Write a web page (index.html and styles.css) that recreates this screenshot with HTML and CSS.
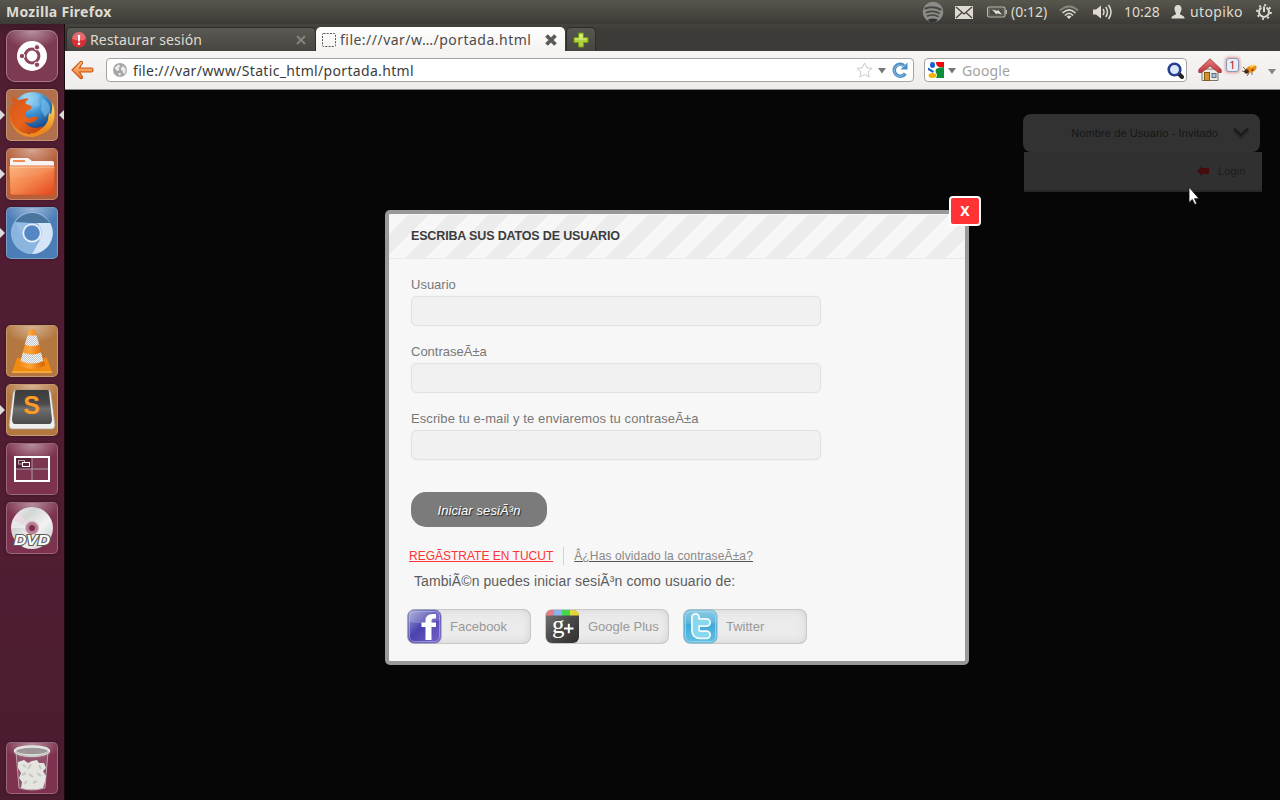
FILE: index.html
```html
<!DOCTYPE html>
<html lang="es">
<head>
<meta charset="utf-8">
<title>Mozilla Firefox</title>
<link rel="stylesheet" href="styles.css">
</head>
<body>
<svg class="defs" width="0" height="0">
  <defs>
    <linearGradient id="folder" x1="0" y1="0" x2="1" y2="1"><stop offset="0" stop-color="#f9b27a"/><stop offset=".5" stop-color="#f4854c"/><stop offset="1" stop-color="#e2431b"/></linearGradient>
    <radialGradient id="globe" cx=".4" cy=".15" r=".9"><stop offset="0" stop-color="#c4eefb"/><stop offset=".4" stop-color="#3f96d6"/><stop offset="1" stop-color="#0b2a6c"/></radialGradient>
    <linearGradient id="fox" x1="0" y1="0" x2="1" y2="1"><stop offset="0" stop-color="#d5561d"/><stop offset=".55" stop-color="#e8631a"/><stop offset="1" stop-color="#b83c0c"/></linearGradient>
    <linearGradient id="tail" x1="0" y1="0" x2="0" y2="1"><stop offset="0" stop-color="#ffe45c"/><stop offset="1" stop-color="#e87813"/></linearGradient>
    <linearGradient id="cone" x1="0" y1="0" x2="1" y2="0"><stop offset="0" stop-color="#f08a12"/><stop offset=".4" stop-color="#ffa63a"/><stop offset="1" stop-color="#d85f00"/></linearGradient>
    <linearGradient id="key" x1="0" y1="0" x2="0" y2="1"><stop offset="0" stop-color="#3c3c3c"/><stop offset=".4" stop-color="#4a4a4a"/><stop offset=".55" stop-color="#6d6d6d"/><stop offset="1" stop-color="#4b4b4b"/></linearGradient>
    <linearGradient id="disc" x1="0" y1="0" x2="1" y2="1"><stop offset="0" stop-color="#f4f4f4"/><stop offset=".3" stop-color="#d4d6d4"/><stop offset=".6" stop-color="#f2f2f2"/><stop offset="1" stop-color="#c3c3c3"/></linearGradient>
    <linearGradient id="back" x1="0" y1="0" x2="0" y2="1"><stop offset="0" stop-color="#fbc58f"/><stop offset="1" stop-color="#ee7a2a"/></linearGradient>
    <linearGradient id="roof" x1="0" y1="0" x2="0" y2="1"><stop offset="0" stop-color="#e27c7c"/><stop offset="1" stop-color="#bf3a40"/></linearGradient>
    <linearGradient id="fb" x1="0" y1="0" x2="1" y2="1"><stop offset="0" stop-color="#9fa6d8"/><stop offset=".45" stop-color="#4b42ae"/><stop offset="1" stop-color="#7a62c8"/></linearGradient>
    <linearGradient id="gp" x1="0" y1="0" x2="1" y2="1"><stop offset="0" stop-color="#777"/><stop offset=".5" stop-color="#4a4a4a"/><stop offset="1" stop-color="#2e2e2e"/></linearGradient>
    <linearGradient id="tw" x1="0" y1="0" x2="0" y2="1"><stop offset="0" stop-color="#8fcbe4"/><stop offset=".4" stop-color="#5cb6dc"/><stop offset=".42" stop-color="#3fa9d6"/><stop offset="1" stop-color="#62c0e2"/></linearGradient>
    <pattern id="mesh" width="2" height="2" patternUnits="userSpaceOnUse"><rect width="2" height="2" fill="#f4f4f4"/><rect width="1" height="1" fill="#bfc6cc"/><rect x="1" y="1" width="1" height="1" fill="#bfc6cc"/></pattern>
  </defs>
</svg>

<header class="panel">
  <span class="panel-title">Mozilla Firefox</span>
  <div class="indicators">
    <svg class="i-spot" width="22" height="22" viewBox="0 0 22 22"><circle cx="11" cy="11" r="10.3" fill="#8b8b89"/><g fill="none" stroke="#47463f" stroke-linecap="round"><path d="M3.5 7.5Q11 4.500 18.500 8.500" stroke-width="2"/><path d="M4.500 11.500Q11 9 17 12" stroke-width="1.800"/><path d="M5.500 15Q11 13 16 15.500" stroke-width="1.500"/></g><path d="M6 18.500q5-2 9.500 0l-1 2q-4 1.500-7.500 0z" fill="#33322e"/></svg>
    <svg class="i-mail" width="18" height="13" viewBox="0 0 18 13"><rect width="18" height="13" fill="#dfdbd2"/><path d="M1 1l8 7 8-7M1 12l6-5.500M17 12l-6-5.500" fill="none" stroke="#45443e" stroke-width="1.300"/></svg>
    <svg class="i-batt" width="20" height="12" viewBox="0 0 20 12"><rect x=".6" y="1" width="17.400" height="10" rx="1.500" fill="none" stroke="#bdb9af" stroke-width="1.200"/><rect x="2.500" y="3" width="13.500" height="6" fill="none" stroke="#66645b"/><path d="M19.200 4v4" stroke="#bdb9af" stroke-width="1.500"/><path d="M5 3.500l5.500 1.500.5-1.300 4 4.800-5-1.200-.5 1.200z" fill="#e8e4da"/></svg>
    <span class="t-batt">(0:12)</span>
    <svg class="i-wifi" width="20" height="14" viewBox="0 0 20 14"><g fill="none" stroke-width="1.700"><path d="M1 5.500Q10-2.500 19 5.500" stroke="#8b8980"/><path d="M3.500 8Q10 1.500 16.500 8" stroke="#dfdbd2"/><path d="M6 10.500Q10 6 14 10.500" stroke="#dfdbd2"/></g><path d="M10 14l-2.500-2.500q2.500-2 5 0z" fill="#dfdbd2"/></svg>
    <svg class="i-vol" width="21" height="16" viewBox="0 0 21 16"><path d="M1 5.500h3L9 1.500v13L4 10.500H1z" fill="#dfdbd2"/><g fill="none" stroke="#dfdbd2" stroke-width="1.500"><path d="M11 5q2 3 0 6M13.800 3q3.300 5 0 10M16.500 1q5 7 0 14"/></g></svg>
    <span class="t-clock">10:28</span>
    <svg class="i-user" width="14" height="14" viewBox="0 0 14 14"><path d="M7 0C9.500 0 10.800 1.800 10.500 4.500 10.300 6.500 9 7.500 9 9c0 1 4.500 1.200 4.700 4.500H.3C.5 10.200 5 10 5 9 5 7.500 3.700 6.500 3.500 4.500 3.200 1.800 4.500 0 7 0z" fill="#dfdbd2"/></svg>
    <span class="t-user">utopiko</span>
    <svg class="i-gear" width="16" height="16" viewBox="0 0 16 16"><g fill="none" stroke="#dfdbd2"><path d="M5.500 3.600a5 5 0 1 0 5 0" stroke-width="2"/><circle cx="8" cy="8" r="6.900" stroke-width="2" stroke-dasharray="2 3.420"/><path d="M8 2.500v5.500" stroke-width="2"/></g></svg>
  </div>
</header>

<div class="desktop">
  <nav class="launcher">
    <div class="tile dash"><svg viewBox="0 0 52 52"><circle cx="26" cy="26" r="15" fill="#fff"/><circle cx="26" cy="26" r="6.900" fill="none" stroke="#8d4560" stroke-width="3"/><g fill="#8d4560" stroke="#fff" stroke-width="1"><circle cx="16" cy="26" r="2.700"/><circle cx="31" cy="17.300" r="2.700"/><circle cx="31" cy="34.700" r="2.700"/></g></svg></div>
    <div class="tile tan running focused"><svg viewBox="0 0 52 52"><circle cx="27" cy="24" r="21" fill="url(#globe)"/><path d="M20 6q8-3 14 0l-3 6 3 4-5 2-4-4-4 0zM36 9q9 5 8 13l-5 6-4-7z" fill="#7fc4ec" opacity=".6"/><path d="M46 13c3 6 3 12 2 18-2 10-11 16-21 16l-6-5c9 1 18-2 21-11 0-3 1-5 1-8 1 2 2 2 2 2s2-6 1-12z" fill="url(#tail)"/><path d="M7 6c1 3 4 5 7 5 3-1 6-2 9-1-3 2-4 3-3 5 2 1 5 1 6 3-1 3-6 4-7 6 0 3 2 5 5 5 3-1 6-2 8 0-3 5-9 6-13 4 3 5 10 8 18 4-5 8-16 10-24 4C4 36 2 27 4 20c1-3 2-4 3-5-1-3-1-6 0-9z" fill="url(#fox)"/><path d="M4 24c0 12 9 21 21 21 7 0 12-3 15-6-4 7-10 9-15 9C12 48 3 37 4 24z" fill="#ee8a20"/></svg></div>
    <div class="tile rust running"><svg viewBox="0 0 52 52"><path d="M4 19V12q0-2 2-2h16l4 3h20q2 0 2 2v6z" fill="#f7f4f1"/><rect x="7" y="12" width="12" height="2" fill="#f28c53"/><path d="M3 18h46l-1 27q0 2-2 2H6q-2 0-2-2z" fill="url(#folder)" stroke="#d25322" stroke-width=".8"/><path d="M4 19h44" stroke="#ffc79a"/><path d="M4 29q25 2 44-8v-2H4z" fill="#fff" opacity=".05"/></svg></div>
    <div class="tile blue running"><svg viewBox="0 0 52 52"><circle cx="26" cy="26" r="21" fill="#95bce5"/><path d="M9 15A21 21 0 0 1 44 16H26z" fill="#49759e"/><path d="M44 16A21 21 0 0 1 26 47l9-17q3-7-4-14z" fill="#d4e5f7"/><path d="M9 14A21 21 0 0 0 26 47l8-14-9 2-9-7z" fill="#8bb4df"/><circle cx="26" cy="26" r="9.500" fill="#e8f2fb"/><circle cx="26" cy="26" r="7.800" fill="#5487c3"/></svg></div>
    <div class="slot"></div>
    <div class="tile amber"><svg viewBox="0 0 52 52"><path d="M11 33h30l5 14q0 1-1 1H7q-1 0-1-1z" fill="#f18a10"/><path d="M6 47h40" stroke="#ffc25c"/><path d="M23 5q3-2 6 0l10 35q-13 8-26 0z" fill="url(#cone)"/><path d="M21.500 10.500h9l2.700 9q-7 3-14.400 0zM17 27.500q9 4 18 0l2.400 8.500q-11 5-22.800 0z" fill="url(#mesh)"/></svg></div>
    <div class="tile amber running"><svg viewBox="0 0 52 52"><path d="M7 9q1-3 3-3h32q2 0 3 3l4 32q0 4-3 4H6q-3 0-3-4z" fill="#eeeeec" stroke="#9c9a96" stroke-width=".7"/><path d="M9 8q0-2 2-2h30q2 0 2 2l3 27q0 5-3 5H9q-3 0-3-5z" fill="url(#key)"/><text class="sub-s" x="25.500" y="30">S</text></svg></div>
    <div class="tile plum"><svg viewBox="0 0 52 52"><rect x="9" y="14" width="34" height="24" fill="#7c3651" stroke="#fff" stroke-width="2"/><rect x="10" y="15" width="16" height="11" fill="#56233a"/><path d="M26 15v22M10 26h32" stroke="#a9a0a4"/><rect x="12.500" y="17.500" width="6" height="3.500" fill="none" stroke="#b9aab0"/><rect x="16.500" y="19.500" width="7" height="4" fill="#56233a" stroke="#fff"/></svg></div>
    <div class="tile plum"><svg viewBox="0 0 52 52"><circle cx="26" cy="26" r="21" fill="url(#disc)"/><path d="M26 26L7 17l5-6z" fill="#f5d9ec" opacity=".7"/><path d="M26 26L5 26l2-8z" fill="#eceff0" opacity=".7"/><circle cx="26" cy="26" r="6.500" fill="#b87d93" stroke="#d9b9c5"/><circle cx="26" cy="26" r="3" fill="#7a2d49"/><text class="dvd" x="26" y="43" textLength="36" lengthAdjust="spacingAndGlyphs">DVD</text></svg></div>
    <div class="tile plum trash"><svg viewBox="0 0 52 52"><path d="M10 10l3 36q13 4 26 0l3-36z" fill="#c9a3b1" fill-opacity=".25" stroke="#c9bcc1" stroke-width=".8"/><path d="M12 20l6-2 4 3 4-2 5-1 2 3 5 0 2 5-3 3 3 5-1 6-2 6q-11 3-22 0l1-6-3-4 2-5-3-5z" fill="#e4e4e0"/><path d="M17 23l3 2M25 22l-3 5M33 23l2 4M16 33l4-2M23 32l4 3M31 31l4 3M18 42l3-3M27 41l4-2" fill="none" stroke="#c6c7c2" stroke-width="2"/><ellipse cx="26" cy="9" rx="17" ry="4.500" fill="#9d9799" stroke="#e4e4e2" stroke-width="2.500"/><path d="M9 10q17 9 34 0" fill="none" stroke="#c4c4c1" stroke-width="1.500"/></svg></div>
  </nav>

  <main class="browser">
    <div class="tabs">
      <div class="tab idle">
        <svg width="16" height="16" viewBox="0 0 16 16"><circle cx="8" cy="8" r="7.500" fill="#d32f35"/><path d="M1 7a7 7 0 0 1 14 0q-7 3-14 0z" fill="#ee8286" opacity=".7"/><path d="M6.800 3h2.400l-.4 6.500H7.200z" fill="#fff"/><circle cx="8" cy="11.800" r="1.300" fill="#fff"/></svg>
        <span class="t-tab1">Restaurar sesión</span>
        <svg class="x" width="12" height="12" viewBox="0 0 12 12"><path d="M2 2l8 8M10 2l-8 8" stroke="#85837d" stroke-width="2"/></svg>
      </div>
      <div class="tab current">
        <svg width="14" height="14" viewBox="0 0 14 14"><rect x=".5" y=".5" width="13" height="13" rx="1" fill="none" stroke="#555" stroke-dasharray="2 1.200"/></svg>
        <span class="t-tab2">file:///var/w…/portada.html</span>
        <svg class="x" width="14" height="14" viewBox="0 0 14 14"><path d="M2.500 2.500l9 9M11.500 2.500l-9 9" stroke="#5a5a56" stroke-width="3.800"/></svg>
      </div>
      <div class="newtab"><svg width="16" height="16" viewBox="0 0 16 16"><path d="M5.500 1h5v4.500H15v5h-4.500V15h-5v-4.500H1v-5h4.500z" fill="#b1d23c" stroke="#6f9a1a"/><path d="M6.500 2h3v4.500H14v1H2v-1h4.500z" fill="#d8ec7c"/></svg></div>
    </div>
    <div class="toolbar">
      <svg class="back" width="23" height="20" viewBox="0 0 23 20"><path d="M1 10L9.500 1.500q2.500-.5 2 1.500L8.500 8H20.500q1.500 0 1.500 1.500v1q0 1.500-1.500 1.500H8.500l3 5q.5 2-2 1.500z" fill="url(#back)" stroke="#cc5712" stroke-width="1.100"/></svg>
      <div class="urlbar">
        <svg width="14" height="14" viewBox="0 0 14 14"><circle cx="7" cy="7" r="7" fill="#a5a5a5"/><path d="M1.500 5l4-3.500 2 1.500-2 2 1 2-2.500 1zM8 5l2-2 3 3-1 5-2-1-.5-2.500L8 7.500zM5 10l3 0-1 3.500z" fill="#ececec"/></svg>
        <span class="t-url">file:///var/www/Static_html/portada.html</span>
        <svg class="star" width="17" height="16" viewBox="0 0 17 16"><path d="M8.500 1l2.200 4.800 5.300.6-4 3.500 1.200 5.100-4.700-2.600L3.800 15 5 9.900l-4-3.500 5.300-.6z" fill="#fff" stroke="#c9c9c9"/></svg>
        <svg class="drop" width="8" height="6" viewBox="0 0 8 6"><path d="M0 0h8L4 5.500z" fill="#777"/></svg>
        <svg class="reload" width="16" height="16" viewBox="0 0 16 16"><path d="M13.300 11.500A6 6 0 1 1 12 3.500" fill="none" stroke="#4f8fc8" stroke-width="3.500"/><path d="M15.500.5v7h-7z" fill="#4f8fc8"/><path d="M12.800 11.500A5.700 5.700 0 1 1 11 3.800" fill="none" stroke="#8bbbe2" stroke-width="1"/></svg>
      </div>
      <div class="search">
        <svg width="16" height="16" viewBox="0 0 16 16"><rect width="16" height="16" fill="#fff"/><path d="M8 0h8v5H11q-3-1-3-5z" fill="#f00808"/><path d="M8 7q3-2 8-2v11H8q2-3 0-5-1-2 0-4z" fill="#0b8f3c"/><ellipse cx="4.500" cy="3" rx="2.500" ry="3" fill="#1a63cc"/><path d="M0 5.500l6 3.500-1 2-5-3z" fill="#1a63cc"/><ellipse cx="4.500" cy="13.500" rx="4" ry="2.500" fill="#f5b50a"/></svg>
        <svg class="drop" width="8" height="6" viewBox="0 0 8 6"><path d="M0 0h8L4 5.500z" fill="#777"/></svg>
        <span class="t-google">Google</span>
        <svg class="lens" width="17" height="17" viewBox="0 0 17 17"><path d="M11 11l4 4" stroke="#222" stroke-width="4" stroke-linecap="round"/><circle cx="7.500" cy="7.500" r="5.800" fill="#d9e7f7" stroke="#263f92" stroke-width="2.600"/></svg>
      </div>
      <svg class="home" width="24" height="24" viewBox="0 0 24 24"><path d="M4 11h16v11.500H4z" fill="#eeeae3" stroke="#77756f"/><rect x="6.500" y="14.500" width="5" height="8" fill="#cf9332" stroke="#8b5a12"/><rect x="14" y="15.500" width="4" height="4" fill="#a9c3df" stroke="#5c7187"/><path d="M12 .8L.8 11.500V14.500h2.700L12 8l8.500 6.500h2.700V11.500z" fill="url(#roof)" stroke="#9b2b30" stroke-width=".8"/></svg>
      <span class="badge">1</span>
      <svg class="bug" width="16" height="14" viewBox="0 0 16 14"><path d="M1 4l3 3M0 8l4 1M5 13l2-3M10 12l0-3M14 4l-3 1" stroke="#444" stroke-width=".8"/><ellipse cx="9" cy="6" rx="6" ry="3.400" transform="rotate(-25 9 6)" fill="#e98a13"/><path d="M8 4l5-2" stroke="#ffdf6a" stroke-width="1.500"/><circle cx="4.500" cy="8.500" r="2.300" fill="#4a2a12"/><circle cx="10.500" cy="7" r="1" fill="#8f2608"/></svg>
      <svg class="drop end" width="8" height="6" viewBox="0 0 8 6"><path d="M0 0h8L4 5.500z" fill="#888"/></svg>
    </div>

    <section class="page">
      <div class="account">
        <div class="account-head"><span>Nombre de Usuario - Invitado</span><svg width="16" height="13" viewBox="0 0 16 13"><path d="M1 3l7 6.500L15 3" fill="none" stroke="#272727" stroke-width="4"/><path d="M1 1.500l7 6.500 7-6.500" fill="none" stroke="#1a1a1a" stroke-width="2"/></svg></div>
        <div class="account-menu"><svg width="12" height="10" viewBox="0 0 12 10"><path d="M0 5L5 0v2h7v6H5V10z" fill="#450c0c"/></svg><span>Login</span></div>
      </div>

      <div class="modal">
        <a class="close">X</a>
        <h1>ESCRIBA SUS DATOS DE USUARIO</h1>
        <form class="form">
          <label class="field"><span>Usuario</span><input type="text"></label>
          <label class="field"><span>ContraseÃ±a</span><input type="text"></label>
          <label class="field recover"><span>Escribe tu e-mail y te enviaremos tu contraseÃ±a</span><input type="text"></label>
          <button type="button" class="submit">Iniciar sesiÃ³n</button>
        </form>
        <div class="links"><a class="register">REGÃSTRATE EN TUCUT</a><a class="forgot">Â¿Has olvidado la contraseÃ±a?</a></div>
        <p class="also">TambiÃ©n puedes iniciar sesiÃ³n como usuario de:</p>
        <div class="social">
          <a><svg width="35" height="35" viewBox="0 0 35 35"><rect x="1" y="1" width="33" height="33" rx="6" fill="url(#fb)" stroke="#7d80b8"/><rect x="2.500" y="2.500" width="30" height="30" rx="5" fill="none" stroke="#aaa8e0" opacity=".7"/><path d="M2 2h31v9q-16 5-31 2z" fill="#fff" opacity=".18"/><path d="M18.500 31V18h-4v-4.500h4v-2q0-6.500 7-6.500h3.500v4.500H27q-2.500 0-2.500 2.500v1.500H29V18h-4.500v13z" fill="#fff"/></svg>Facebook</a>
          <a><svg width="35" height="35" viewBox="0 0 35 35"><rect x="1" y="1" width="33" height="33" rx="6" fill="url(#gp)"/><path d="M1 6q0-5 6-5h2.500v5.500H1z" fill="#e57d88"/><path d="M9 1h8.500v5.500H9z" fill="#8db1ea"/><path d="M17 1h8.500v5.500H17z" fill="#42d94a"/><path d="M25 1h3q6 0 6 5.500h-9z" fill="#e6d43b"/><text class="gplus" x="7" y="24">g</text><path d="M19 19.500h9.500M23.800 14.800v9.500" stroke="#fff" stroke-width="2"/></svg>Google Plus</a>
          <a><svg width="35" height="35" viewBox="0 0 35 35"><rect x="1" y="1" width="33" height="33" rx="6" fill="url(#tw)" stroke="#7db8d2"/><rect x="2.500" y="2.500" width="30" height="30" rx="5" fill="none" stroke="#a9dcf0" opacity=".7"/><g fill="none" stroke-linecap="round" stroke-linejoin="round"><path d="M12.500 8.500V21q0 4.800 4.800 4.800h6.200M12.500 13.500h11" stroke="#f4f8fa" stroke-width="9"/><path d="M12.500 8.500V21q0 4.800 4.800 4.800h6.200M12.500 13.500h11" stroke="#86d8ef" stroke-width="5.400"/></g></svg>Twitter</a>
        </div>
      </div>
    </section>
  </main>
</div>
<svg class="cursor" width="12" height="20" viewBox="0 0 12 20"><path d="M1 1v15.500l3.300-3 2.500 5 2-1-2.300-4.800H11z" fill="#fff" stroke="#111" stroke-width=".8"/></svg>
</body>
</html>
```
FILE: styles.css
```css
* { box-sizing: border-box; }
body {
  margin: 0; width: 1280px; height: 800px; overflow: hidden;
  display: flex; flex-direction: column;
  font-family: "Liberation Sans", Arial, sans-serif; background: #060606;
}
.defs { position: absolute; }
svg { display: block; flex: none; }

/* top panel */
.panel {
  flex: none; height: 24px; display: flex; align-items: center; justify-content: space-between;
  padding: 0 8px 0 6px; background: linear-gradient(#58564c, #3c3b37);
  color: #dfdbd2; font: 14px/24px "Noto Sans", sans-serif; white-space: nowrap;
}
.panel-title { font-weight: 700; letter-spacing: .27px; }
.indicators { display: flex; align-items: center; }
.i-mail { margin-left: 11px; }
.i-batt { margin-left: 14px; }
.t-batt { width: 37px; margin-left: 4px; }
.i-wifi { margin-left: 11px; }
.i-vol { margin-left: 13px; }
.t-clock { width: 36px; margin-left: 11px; }
.i-user { margin-left: 11px; }
.t-user { width: 53px; margin-left: 5px; letter-spacing: .35px; }
.i-gear { margin-left: 13px; }

.desktop { flex: 1; display: flex; min-height: 0; }

/* launcher */
.launcher {
  flex: none; width: 65px; padding: 6px 0 6px 6px; display: flex; flex-direction: column; gap: 7px;
  background: linear-gradient(#3e1b29, #501d32 12px, #511d33 60%, #4a1c30);
  border-right: 1px solid #1b0b12;
}
.tile {
  position: relative; width: 52px; height: 52px; border-radius: 5px; flex: none;
  border: 1px solid rgba(255, 255, 255, .25); box-shadow: 0 0 3px rgba(0, 0, 0, .35);
}
.tile svg { width: 52px; height: 52px; margin: -1px; position: relative; }
.tile::before {
  content: ""; position: absolute; inset: 0; border-radius: 4px;
  background: radial-gradient(ellipse 28px 18px at 50% 0, rgba(255, 255, 255, .45), rgba(255, 255, 255, 0));
}
.slot { width: 52px; height: 52px; flex: none; }
.dash { background: #7d3a53; border-radius: 9px; border-color: #a97789; }
.tan { background: #b2714c; }
.rust { background: #b5603c; }
.blue { background: #4b7db6; }
.amber { background: #b3773f; }
.plum { background: #7d3350; }
.trash { margin-top: auto; }
.running::after {
  content: ""; position: absolute; left: -7px; top: 20px;
  border: 5px solid transparent; border-left-color: #dcdcdc; border-right: 0;
}
/* second arrow on the right edge marks the focused application */
.focused::before {
  inset: 20px -7px auto auto; width: 5px; height: 10px; border-radius: 0;
  background: #dcdcdc; clip-path: polygon(100% 0, 0 50%, 100% 100%);
}
.sub-s { font: 700 25px "Liberation Sans", sans-serif; fill: #ff9a24; text-anchor: middle; }
.dvd { font: italic 900 14px "Liberation Sans", sans-serif; fill: #fff; stroke: #5c5c5c; stroke-width: 2px; paint-order: stroke; text-anchor: middle; }

/* browser chrome */
.browser { flex: 1; display: flex; flex-direction: column; min-width: 0; }
.tabs { flex: none; height: 27px; padding: 3px 0 0 1px; display: flex; background: linear-gradient(#45433e, #3c3b37 8px); font: 14px/24px "Noto Sans", sans-serif; }
.tab { display: flex; align-items: center; height: 24px; white-space: nowrap; border-radius: 5px 5px 0 0; }
.tab .x { margin-left: auto; }
.idle { width: 250px; padding: 0 8px 0 4px; gap: 3px; background: linear-gradient(#5a5954, #464540); color: #dfdbd2; border: 1px solid #2e2d2a; border-bottom: 0; }
.t-tab1 { letter-spacing: .15px; }
.current { width: 249px; padding: 1px 7px 0 6px; gap: 4px; background: linear-gradient(#fff, #f4f3f2); color: #4c4c4c; }
.t-tab2 { letter-spacing: .48px; }
.newtab { width: 30px; margin-left: 1px; display: flex; align-items: center; justify-content: center; border: 1px solid #2e2d2a; border-bottom: 0; border-radius: 5px 5px 0 0; background: linear-gradient(#575651, #464540); }
.toolbar {
  flex: none; height: 39px; display: flex; align-items: center; padding: 0 4px 0 6px;
  background: linear-gradient(#f6f5f4, #eeedeb); border-bottom: 1px solid #8c8b87;
  font: 14px/22px "Noto Sans", sans-serif; color: #3c3c3c;
}
.urlbar, .search { display: flex; align-items: center; height: 24px; border: 1px solid #a5a39e; border-radius: 4px; background: #fff; white-space: nowrap; }
.urlbar { width: 808px; margin-left: 12px; padding: 0 5px 0 6px; }
.t-url { margin: 2px 0 0 6px; letter-spacing: .33px; }
.star { margin-left: auto; }
.urlbar .drop { margin: 2px 6px 0 5px; }
.search { width: 263px; margin-left: 10px; padding: 0 2px 0 3px; }
.search .drop { margin: 2px 0 0 4px; }
.t-google { margin: 2px 0 0 6px; letter-spacing: .15px; color: #a3a3a3; }
.lens { margin-left: auto; }
.home { margin-left: 11px; }
.badge { width: 13px; height: 14px; margin: -10px 0 0 4px; border: 1px solid #8a9cb5; border-radius: 3px; background: #e6edf6; box-shadow: 0 0 3px 1px #e79a9a; color: #b01818; font-size: 11px; line-height: 12px; text-align: center; }
.bug { margin-left: 3px; }
.drop.end { margin: 3px 0 0 auto; }

/* page */
.page { flex: 1; position: relative; background: #060606; }
.account { width: 239px; margin: 24px 18px 0 auto; }
.account-head { width: 237px; height: 38px; padding: 0 11px 0 0; display: flex; align-items: center; justify-content: flex-end; gap: 15px; border-radius: 8px; background: #323232; color: #161616; font-size: 11px; letter-spacing: .11px; }
.account-menu { height: 40px; margin-left: 1px; padding-right: 17px; display: flex; align-items: center; justify-content: flex-end; gap: 9px; background: #303030; border-bottom: 2px solid #282828; color: #1c1c1c; font-size: 11px; }

.modal { position: absolute; left: 320px; top: 120px; width: 584px; height: 455px; border: 4px solid #999; border-radius: 5px; background: #f7f7f7; }
.close { position: absolute; top: -18px; right: -16px; width: 32px; height: 30px; border: 2px solid #fff; border-radius: 4px; background: #f33; color: #fff; font: 700 14px/26px "Noto Sans", sans-serif; text-align: center; }
.modal h1 { height: 44px; margin: 1px 0 0; padding-left: 22px; border-bottom: 1px solid #eaeaea; background: repeating-linear-gradient(135deg, #f7f7f7 0 14.142px, #ececec 14.142px 28.284px); color: #3c3c3c; font-size: 12.500px; line-height: 42px; letter-spacing: -.15px; }
.form { padding: 18px 22px 0; display: flex; flex-direction: column; align-items: flex-start; }
.field { display: block; width: 410px; height: 67px; color: #777; font-size: 13px; line-height: 16px; }
.recover { letter-spacing: .09px; }
.field span { display: block; height: 19px; }
.field input { display: block; width: 410px; height: 30px; padding: 0; border: 1px solid #e2e2e2; border-radius: 6px; background: #f1f1f1; box-shadow: 0 0 2px rgba(0, 0, 0, .06); }
.submit { width: 136px; height: 35px; margin-top: 14px; padding: 2px 0 0; border: 0; border-radius: 15px; background: #7b7b7b; color: #fff; font: italic 13px "Liberation Sans", sans-serif; letter-spacing: .1px; text-shadow: 1px 1px 1px #222; }
.links { display: flex; margin: 20px 0 0 20px; font-size: 12px; line-height: 18px; }
.register { padding-right: 10px; border-right: 1px solid #d3d3d3; color: #f33; text-decoration: underline; }
.forgot { padding-left: 10px; color: #888; letter-spacing: .135px; text-decoration: underline #555; }
.also { margin: 7px 0 0 25px; color: #5c5c5c; font-size: 14px; line-height: 18px; letter-spacing: .09px; }
.social { display: flex; gap: 14px; margin: 19px 0 0 18px; }
.social a { width: 124px; height: 35px; display: flex; align-items: center; gap: 8px; border-radius: 8px; background: #ebebeb; box-shadow: inset 0 0 0 1px #c8c8c8, inset 0 0 10px #cfcfcf; color: #999; font-size: 13px; }
.gplus { font: 25px "Liberation Serif", serif; fill: #fff; }

.cursor { position: absolute; left: 1188px; top: 186px; }
```
